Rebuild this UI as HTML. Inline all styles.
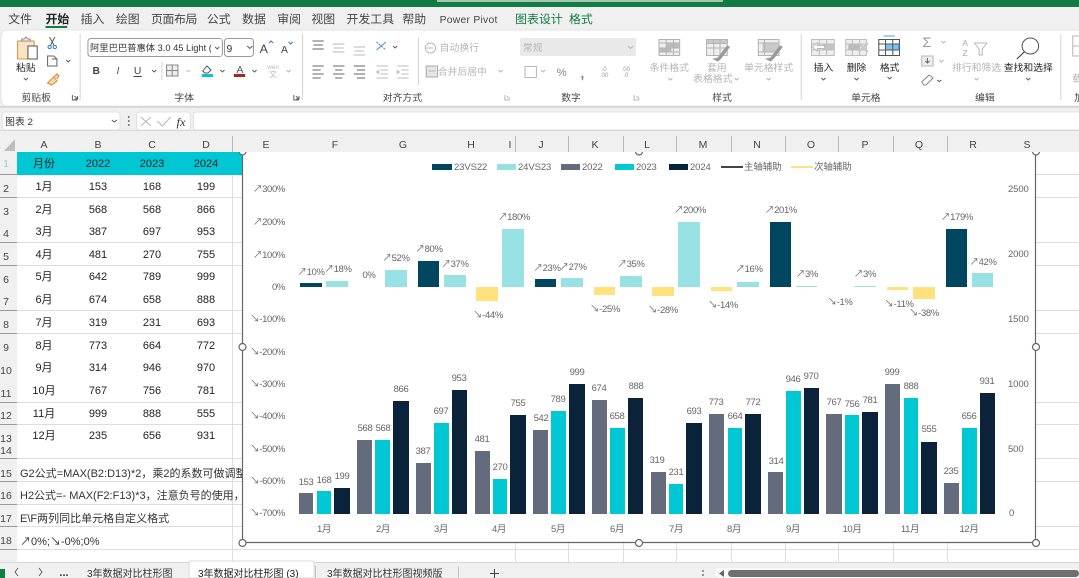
<!DOCTYPE html>
<html lang="zh"><head><meta charset="utf-8"><title>Excel</title>
<style>
html,body{margin:0;padding:0;background:#fff;overflow:hidden;width:1079px;height:578px}
svg{display:block;font-family:"Liberation Sans","Noto Sans CJK SC",sans-serif}
.t{font-size:11px;fill:#222;text-anchor:middle}
.rh{font-size:10.5px;fill:#444;text-anchor:middle}
.ch{font-size:10.5px;fill:#444;text-anchor:middle}
.c{font-size:9.5px;fill:#666;text-anchor:middle;letter-spacing:-.35px}
.r{font-size:9.5px;fill:#666;text-anchor:end;letter-spacing:-.35px}
.l{font-size:9.5px;fill:#666;letter-spacing:-.1px}
.g{font-size:9.5px;fill:#444;text-anchor:middle}
.gd{font-size:9.5px;fill:#b4b4b4;text-anchor:middle}
.b{font-size:9.5px;fill:#222;text-anchor:middle}
.ic{fill:none;stroke:#666;stroke-width:1}
.id{fill:none;stroke:#b8b8b8;stroke-width:1}
.v{fill:none;stroke:#555;stroke-width:.9}
</style></head><body>
<svg width="1079" height="578" viewBox="0 0 1079 578" xmlns="http://www.w3.org/2000/svg">
<rect width="1079" height="578" fill="#fff"/>
<!-- title + tabs -->
<rect width="1079" height="7" fill="#107c41"/>
<rect x="437" width="286" height="2" fill="#a9c4b3"/>
<rect y="7" width="1079" height="129" fill="#f0f0f0"/>
<rect x="1" y="30" width="1090" height="76" rx="6" fill="#fff" stroke="#e4e4e4"/>
<rect y="106" width="1079" height="2" fill="#d8d8d8"/>
<rect x="520" y="38" width="116" height="18" rx="2" fill="#e9e9e9"/>
<!-- left part of the ribbon -->
<g transform="scale(1.0345,1)">
<g font-size="11.5" fill="#444">
<text x="8" y="23">文件</text><text x="44" y="23" font-weight="bold" fill="#222">开始</text><text x="78" y="23">插入</text><text x="112" y="23">绘图</text><text x="146" y="23" letter-spacing="-.4">页面布局</text><text x="200" y="23">公式</text><text x="234" y="23">数据</text><text x="268" y="23">审阅</text><text x="301" y="23">视图</text><text x="335" y="23">开发工具</text><text x="389" y="23">帮助</text><text x="425" y="23" font-size="10" letter-spacing=".25">Power Pivot</text><text x="498" y="23" fill="#107c41">图表设计</text>
</g>
<rect x="44" y="26" width="21" height="2" fill="#107c41"/>
<g stroke="#d4d4d4"><path d="M77.500 34V100M292.500 34V100M404.500 38V85M156.500 62V80"/></g>
<rect x="17" y="41" width="16" height="18" fill="#fbe3c4" stroke="#e0933a"/>
<path d="M21 41v-2h2.500l1.500-2 1.500 2h2.500v2z" fill="#fff" stroke="#888"/>
<rect x="27" y="46" width="9" height="13" fill="#fff" stroke="#555"/>
<text class="b" x="25" y="71">粘贴</text>
<path class="v" d="M23 78l2 2 2-2"/>
<path d="M48 37l4 8M53 37l-4 8" class="v"/><circle cx="48" cy="47" r="1.600" fill="none" stroke="#2b7cd3"/><circle cx="53" cy="47" r="1.600" fill="none" stroke="#2b7cd3"/>
<path class="ic" d="M46 56h6l3 3v7h-9zM50 59h5v7"/><path class="v" d="M64 60l2 2 2-2"/>
<path d="M46 83l6-6 3 4-5 4zM52 77l3-3 2 2-2 3" fill="#fbd9a8" stroke="#d98a2e"/>
<text class="g" x="35" y="101">剪贴板</text>
<path class="ic" d="M70 95v5h5M72 96l3 3M75 96v3h-3"/>
<rect x="85" y="38.500" width="130" height="18" rx="3" fill="#fff" stroke="#9a9a9a"/>
<text x="87" y="51" font-size="9" fill="#333">阿里巴巴普惠体 3.0 45 Light (</text><rect x="204" y="39" width="10" height="17" fill="#fff"/><path class="v" d="M208 47l2 2 2-2"/>
<rect x="217" y="38.500" width="28" height="18" rx="3" fill="#fff" stroke="#9a9a9a"/><text x="219" y="52" font-size="10" fill="#333">9</text><path class="v" d="M239 46l2.500 2.500 2.500-2.500"/>
<text x="255" y="53" font-size="12" fill="#444" text-anchor="middle">A</text><path d="M260 43l2-2 2 2" fill="none" stroke="#2b7cd3"/>
<text x="275" y="53" font-size="10" fill="#444" text-anchor="middle">A</text><path d="M279 42l2 2 2-2" fill="none" stroke="#2b7cd3"/>
<text x="93" y="74" font-size="10" font-weight="bold" fill="#444" text-anchor="middle">B</text>
<text x="114" y="74" font-size="10" font-style="italic" fill="#555" text-anchor="middle">I</text>
<text x="133" y="74" font-size="10" fill="#444" text-anchor="middle">U</text><path d="M129 76.500h8" stroke="#444"/>
<path class="v" d="M147 70l2 2 2-2"/>
<path d="M161 65h11v11h-11zM161 70.500h11M166.500 65v11" fill="#eee" stroke="#888"/>
<path class="id" d="M180 71h4"/>
<path d="M196 71l4-5 4 4-3 3h-3z" fill="#fff" stroke="#555"/><rect x="195" y="74" width="11" height="3" fill="#00c7d4"/><path class="v" d="M213 70l2 2 2-2"/>
<text x="232" y="73" font-size="10" fill="#555" text-anchor="middle">A</text><rect x="226" y="74" width="11" height="3" fill="#b02020"/><path class="v" d="M244 70l2 2 2-2"/>
<text x="264" y="69" font-size="6" fill="#bbb" text-anchor="middle">wén</text><text x="264" y="77" font-size="8" fill="#bbb" text-anchor="middle">文</text><path class="id" d="M277 70l2 2 2-2"/>
<text class="g" x="178" y="101">字体</text>
<path class="ic" d="M284 95v5h5M286 96l3 3M289 96v3h-3"/>
<path class="ic" d="M302 41h11M303 45h9M302 49h11"/>
<path class="id" d="M322 44h11M323 48h9M322 52h11"/>
<path class="id" d="M342 47h11M343 51h9M342 55h11"/>
<path d="M364 50l9-8" stroke="#2b9fe0" fill="none"/><path d="M364 42l9 8" stroke="#777" stroke-dasharray="2 1" fill="none"/><path class="v" d="M380 46l2 2 2-2"/>
<path class="ic" d="M302 66h11M302 70h8M302 74h11M302 78h8"/>
<path class="ic" d="M322 66h11M324 70h7M322 74h11M324 78h7"/>
<path class="ic" d="M342 66h11M345 70h8M342 74h11M345 78h8"/>
<path class="id" d="M364 66h11M368 70h7M368 74h7M364 78h11M364 72l2-1.500v3z"/>
<path class="id" d="M384 66h11M388 70h7M388 74h7M384 78h11M386 72l-2-1.500v3z"/>
<text class="g" x="389" y="101">对齐方式</text>
<path class="id" d="M488 95v5h5M490 96l3 3"/>
<circle cx="416" cy="48" r="5" class="id"/><path class="id" d="M412 48h7"/>
<text class="gd" x="444" y="51" font-size="10">自动换行</text>
<rect x="412" y="66" width="11" height="11" fill="#e6e6e6" stroke="#aaa"/><path class="id" d="M414 71h7"/>
<text class="gd" x="447" y="75">合并后居中</text><path class="id" d="M482 70l2 2 2-2"/>
<text class="gd" x="515" y="51">常规</text>
<rect x="507.500" y="66.500" width="11" height="11" class="id"/>
<!-- formula bar -->
<rect x="2" y="112" width="114" height="18" rx="3" fill="#fff" stroke="#e0e0e0"/>
<text x="5" y="125" font-size="9.500" fill="#333">图表 2</text><path class="v" d="M108 120l2.500 2 2.500-2"/>
<circle cx="124.500" cy="117" r=".9" fill="#555"/><circle cx="124.500" cy="121" r=".9" fill="#555"/><circle cx="124.500" cy="125" r=".9" fill="#555"/>
<rect x="132" y="112" width="52" height="18" rx="3" fill="#fff" stroke="#e0e0e0"/>
<path class="id" d="M136 117l10 9M146 117l-10 9M152 121l5 5 8-9"/>
<text x="175" y="126" font-size="12" font-style="italic" font-family="Liberation Serif" fill="#333" text-anchor="middle">fx</text>
<rect x="187" y="112" width="900" height="18" rx="3" fill="#fff" stroke="#e0e0e0"/>
</g>
<!-- right part of the ribbon -->
<g transform="translate(540,0) scale(1.0345,1) translate(-540,0)">
<text x="568" y="23" font-size="11.5" fill="#107c41">格式</text>
<g stroke="#d4d4d4"><path d="M792.500 34V100M1043.500 34V100"/></g>
<path class="id" d="M541 70l2 2 2-2"/>
<path class="id" d="M625 46l2.500 2.500 2.500-2.500"/>
<text x="561" y="76" font-size="11" fill="#888" text-anchor="middle">%</text>
<text x="581" y="78" font-size="14" font-weight="bold" fill="#888" text-anchor="middle">,</text>
<text x="602" y="71" font-size="6" fill="#999" text-anchor="middle">.0</text><text x="602" y="77" font-size="6" fill="#999" text-anchor="middle">.00</text>
<text x="623" y="71" font-size="6" fill="#999" text-anchor="middle">.00</text><text x="623" y="77" font-size="6" fill="#999" text-anchor="middle">.0</text>
<text class="g" x="570" y="101">数字</text>
<path class="id" d="M631 95v5h5M633 96l3 3"/>
<g stroke="#b4b4b4" fill="#eee"><rect x="655" y="39.500" width="20" height="16"/><rect x="662" y="43" width="13" height="5" fill="#bbb" stroke="none"/><rect x="655" y="48" width="12" height="4" fill="#bbb" stroke="none"/><path d="M655 43h20M655 48h20M655 52h20M662 39v16M669 39v16" fill="none"/></g>
<g stroke="#b4b4b4" fill="#eee"><rect x="701" y="39.500" width="20" height="16"/><rect x="701" y="39.500" width="20" height="4" fill="#c8c8c8"/><path d="M701 48h20M708 39v16M714 39v16" fill="none"/><path d="M708 59l4-1 9-12 2 1-8 11-3 3z" fill="#999" stroke="#999"/></g>
<g stroke="#b4b4b4" fill="#eee"><rect x="751" y="39.500" width="20" height="16"/><rect x="755" y="43" width="16" height="9" fill="#c8c8c8" stroke="none"/><path d="M751 43h20M751 52h20M757 39v16" fill="none"/><path d="M759 59l4-1 9-12 2 1-8 11-3 3z" fill="#999" stroke="#999"/></g>
<text class="gd" x="665" y="71">条件格式</text><text class="gd" x="711" y="71">套用</text><text class="gd" x="707" y="82">表格格式</text><text class="gd" x="761" y="71">单元格样式</text>
<path class="id" d="M664 78l2 2 2-2M728 78l2 2 2-2M759 78l2 2 2-2"/>
<text class="g" x="716" y="101">样式</text>
<g stroke="#bdbdbd" fill="#eee"><rect x="802.500" y="39.500" width="22" height="16"/><rect x="813" y="44" width="11" height="6" fill="#c4c4c4" stroke="none"/><path d="M802 44h22M802 50h22M810 39v16M817 39v16" fill="none"/><path d="M803 47l5-4v2.500h7v3h-7V51z" fill="#fff" stroke="#bbb"/></g>
<g stroke="#bdbdbd" fill="#eee"><rect x="835.500" y="39.500" width="20" height="16"/><rect x="838" y="44" width="11" height="6" fill="#bbb" stroke="none"/><path d="M835 44h20M835 50h20M842 39v16M849 39v16" fill="none"/><path d="M848 43l9 9M857 43l-9 9" stroke="#c8c8c8" stroke-width="2"/></g>
<g fill="#fff" stroke="#555"><rect x="867.500" y="39.500" width="20" height="16"/><rect x="874" y="44" width="13" height="6" fill="#7fc2ee" stroke="#2b7cd3"/><path d="M867 44h20M867 50h20M874 39v16M881 39v16" fill="none"/></g>
<path d="M872 36h11" stroke="#4aa3e0"/>
<text class="b" x="814" y="71">插入</text><text class="b" x="846" y="71">删除</text><text class="b" x="878" y="71">格式</text>
<path class="v" d="M812 78l2 2 2-2M844 78l2 2 2-2M876 77l2 2 2-2"/>
<text class="g" x="855" y="101">单元格</text>
<text x="914" y="47" font-size="14" fill="#999" text-anchor="middle">Σ</text><path class="id" d="M928 41l2 2 2-2"/>
<rect x="909" y="56" width="11" height="10" fill="#eee" stroke="#b8b8b8"/><path class="ic" d="M914.500 58v5M912.500 61l2 2 2-2" stroke="#999"/><path class="id" d="M926 60l2 2 2-2"/>
<path d="M909 82l7-7 4 3-7 7h-2z" fill="#fff" stroke="#888"/><path class="v" d="M924 80l2 1.500 2-1.500"/>
<text x="951" y="46" font-size="8" fill="#aaa" text-anchor="middle">A</text><text x="951" y="56" font-size="8" fill="#aaa" text-anchor="middle">Z</text>
<path class="id" d="M960 43h12l-4.500 6v6h-3v-6z" stroke="#aaa"/>
<circle cx="1014" cy="46" r="8" fill="none" stroke="#555"/><path d="M1008 52l-7 7" stroke="#333"/>
<text class="gd" x="962" y="71">排行和筛选</text><text class="b" x="1012" y="71">查找和选择</text>
<path class="id" d="M960 78l2 2 2-2"/><path class="v" d="M1010 78l2 2 2-2"/>
<text class="g" x="970" y="101">编辑</text>
<rect x="1055" y="36" width="18" height="20" class="id"/><path class="id" d="M1055 46h18M1064 36v20"/>
<text class="gd" x="1066" y="71">加</text><text class="gd" x="1064" y="82">载项</text>
<text class="g" x="1066" y="101">加载</text>
</g>
<rect y="130" width="1079" height="6" fill="#f0f0f0"/><path d="M0 130.500H1079" stroke="#d8d8d8"/>
<!-- grid -->
<rect y="152" width="17" height="410" fill="#f0f0f0"/>
<g stroke="#dedede"><path d="M17 197.500H1079M17 242.500H1079M17 265.500H1079M17 310.500H1079M17 333.500H1079M17 402.500H1079M17 424.500H1079M17 458.500H1079M17 481.500H1079M17 504.500H242M17 526.500H1079M17 549.500H1079M1036 174.500H1079M232.500 175V562M515.500 543V562M568.500 543V562M623.500 543V562M676.500 543V562M731.500 543V562M785.500 543V562M838.500 543V562M893.500 543V562M947.500 543V562"/></g>
<g stroke="#999"><path d="M0 174.500h17M0 197.500h17M0 242.500h17M0 265.500h17M0 310.500h17M0 333.500h17M0 402.500h17M0 424.500h17M0 458.500h17M0 481.500h17M0 504.500h17M0 526.500h17M0 549.500h17"/></g>
<rect x="17" y="152" width="225" height="23" fill="#00c7d4"/>
<text class="rh" x="6" y="167" style="fill:#9cc">1</text><text class="rh" x="6" y="192">2</text><text class="rh" x="6" y="215">3</text><text class="rh" x="6" y="237">4</text><text class="rh" x="6" y="260">5</text><text class="rh" x="6" y="283">6</text><text class="rh" x="6" y="305">7</text><text class="rh" x="6" y="328">8</text><text class="rh" x="6" y="351">9</text><text class="rh" x="6" y="374">10</text><text class="rh" x="6" y="397">11</text><text class="rh" x="6" y="419">12</text><text class="rh" x="6" y="442">13</text><text class="rh" x="6" y="454">14</text><text class="rh" x="6" y="477">15</text><text class="rh" x="6" y="499">16</text><text class="rh" x="6" y="522">17</text><text class="rh" x="6" y="544">18</text>
<!-- table -->
<text class="t" x="44" y="167">月份</text><text class="t" x="98" y="167">2022</text><text class="t" x="152" y="167">2023</text><text class="t" x="206" y="167">2024</text>
<text class="t" x="44" y="190">1月</text><text class="t" x="98" y="190">153</text><text class="t" x="152" y="190">168</text><text class="t" x="206" y="190">199</text>
<text class="t" x="44" y="213">2月</text><text class="t" x="98" y="213">568</text><text class="t" x="152" y="213">568</text><text class="t" x="206" y="213">866</text>
<text class="t" x="44" y="235">3月</text><text class="t" x="98" y="235">387</text><text class="t" x="152" y="235">697</text><text class="t" x="206" y="235">953</text>
<text class="t" x="44" y="258">4月</text><text class="t" x="98" y="258">481</text><text class="t" x="152" y="258">270</text><text class="t" x="206" y="258">755</text>
<text class="t" x="44" y="280">5月</text><text class="t" x="98" y="280">642</text><text class="t" x="152" y="280">789</text><text class="t" x="206" y="280">999</text>
<text class="t" x="44" y="303">6月</text><text class="t" x="98" y="303">674</text><text class="t" x="152" y="303">658</text><text class="t" x="206" y="303">888</text>
<text class="t" x="44" y="326">7月</text><text class="t" x="98" y="326">319</text><text class="t" x="152" y="326">231</text><text class="t" x="206" y="326">693</text>
<text class="t" x="44" y="349">8月</text><text class="t" x="98" y="349">773</text><text class="t" x="152" y="349">664</text><text class="t" x="206" y="349">772</text>
<text class="t" x="44" y="371">9月</text><text class="t" x="98" y="371">314</text><text class="t" x="152" y="371">946</text><text class="t" x="206" y="371">970</text>
<text class="t" x="44" y="394">10月</text><text class="t" x="98" y="394">767</text><text class="t" x="152" y="394">756</text><text class="t" x="206" y="394">781</text>
<text class="t" x="44" y="417">11月</text><text class="t" x="98" y="417">999</text><text class="t" x="152" y="417">888</text><text class="t" x="206" y="417">555</text>
<text class="t" x="44" y="439">12月</text><text class="t" x="98" y="439">235</text><text class="t" x="152" y="439">656</text><text class="t" x="206" y="439">931</text>
<g font-size="11" fill="#333">
<text x="20" y="477">G2公式=MAX(B2:D13)*2，乘2的系数可做调整，</text>
<text x="20" y="499">H2公式=- MAX(F2:F13)*3，注意负号的使用，通过</text>
<text x="20" y="522">E\F两列同比单元格自定义格式</text>
<text x="20" y="545">↗0%;↘-0%;0%</text>
</g>
<!-- chart -->
<rect x="242.500" y="152" width="793" height="390.500" fill="#fff"/>
<g fill="#00465f"><rect x="300" y="283" width="22" height="4"/><rect x="418" y="261" width="21" height="26"/><rect x="535" y="279" width="21" height="8"/><rect x="770" y="222" width="21" height="65"/><rect x="946" y="229" width="21" height="58"/></g>
<g fill="#98e2e6"><rect x="326" y="281" width="22" height="6"/><rect x="385" y="270" width="22" height="17"/><rect x="444" y="275" width="22" height="12"/><rect x="502" y="229" width="22" height="58"/><rect x="561" y="278" width="22" height="9"/><rect x="620" y="276" width="22" height="11"/><rect x="678" y="222" width="22" height="65"/><rect x="737" y="282" width="22" height="5"/><rect x="796" y="286" width="21" height="1"/><rect x="854" y="286" width="22" height="1"/><rect x="972" y="273" width="21" height="14"/></g>
<g fill="#ffe27c"><rect x="476" y="287" width="22" height="14"/><rect x="594" y="287" width="21" height="8"/><rect x="652" y="287" width="22" height="9"/><rect x="711" y="287" width="21" height="4"/><rect x="887" y="287" width="21" height="3"/><rect x="913" y="287" width="22" height="12"/></g>
<text class="c" x="311" y="275">↗10%</text><text class="c" x="338" y="272">↗18%</text><text class="c" x="369" y="278">0%</text><text class="c" x="396" y="261">↗52%</text><text class="c" x="429" y="252">↗80%</text><text class="c" x="455" y="267">↗37%</text><text class="c" x="488" y="318">↘-44%</text><text class="c" x="514" y="220">↗180%</text><text class="c" x="547" y="271">↗23%</text><text class="c" x="573" y="270">↗27%</text><text class="c" x="605" y="312">↘-25%</text><text class="c" x="631" y="267">↗35%</text><text class="c" x="663" y="313">↘-28%</text><text class="c" x="690" y="213">↗200%</text><text class="c" x="723" y="308">↘-14%</text><text class="c" x="749" y="272">↗16%</text><text class="c" x="781" y="213">↗201%</text><text class="c" x="807" y="277">↗3%</text><text class="c" x="840" y="305">↘-1%</text><text class="c" x="865" y="277">↗3%</text><text class="c" x="899" y="307">↘-11%</text><text class="c" x="924" y="316">↘-38%</text><text class="c" x="957" y="220">↗179%</text><text class="c" x="983" y="265">↗42%</text>
<text class="r" x="285" y="192">↗300%</text><text class="r" x="285" y="225">↗200%</text><text class="r" x="285" y="258">↗100%</text><text class="r" x="285" y="290">0%</text><text class="r" x="285" y="322">↘-100%</text><text class="r" x="285" y="355">↘-200%</text><text class="r" x="285" y="387">↘-300%</text><text class="r" x="285" y="419">↘-400%</text><text class="r" x="285" y="452">↘-500%</text><text class="r" x="285" y="484">↘-600%</text><text class="r" x="285" y="516">↘-700%</text>
<text class="l" x="1008" y="192">2500</text><text class="l" x="1008" y="257">2000</text><text class="l" x="1008" y="322">1500</text><text class="l" x="1008" y="387">1000</text><text class="l" x="1008" y="452">500</text><text class="l" x="1009" y="516">0</text>
<!-- lower bars -->
<g fill="#636b7c"><rect x="299" y="493" width="14" height="21"/><rect x="357" y="440" width="15" height="74"/><rect x="416" y="463" width="15" height="51"/><rect x="475" y="451" width="15" height="63"/><rect x="533" y="430" width="15" height="84"/><rect x="592" y="400" width="15" height="114"/><rect x="651" y="472" width="15" height="42"/><rect x="709" y="414" width="15" height="100"/><rect x="768" y="472" width="15" height="42"/><rect x="826" y="414" width="16" height="100"/><rect x="885" y="384" width="15" height="130"/><rect x="944" y="483" width="15" height="31"/></g>
<g fill="#00c7d4"><rect x="317" y="491" width="14" height="23"/><rect x="375" y="440" width="15" height="74"/><rect x="434" y="423" width="15" height="91"/><rect x="493" y="479" width="14" height="35"/><rect x="551" y="411" width="15" height="103"/><rect x="610" y="428" width="15" height="86"/><rect x="669" y="484" width="14" height="30"/><rect x="728" y="428" width="14" height="86"/><rect x="786" y="391" width="15" height="123"/><rect x="845" y="415" width="14" height="99"/><rect x="904" y="398" width="14" height="116"/><rect x="962" y="428" width="15" height="86"/></g>
<g fill="#0a233b"><rect x="334" y="488" width="16" height="26"/><rect x="393" y="401" width="16" height="113"/><rect x="452" y="390" width="15" height="124"/><rect x="510" y="415" width="16" height="99"/><rect x="569" y="384" width="16" height="130"/><rect x="628" y="398" width="15" height="116"/><rect x="686" y="423" width="16" height="91"/><rect x="745" y="414" width="16" height="100"/><rect x="804" y="388" width="15" height="126"/><rect x="862" y="412" width="16" height="102"/><rect x="921" y="442" width="16" height="72"/><rect x="980" y="393" width="15" height="121"/></g>
<text class="c" x="306" y="485">153</text><text class="c" x="324" y="483">168</text><text class="c" x="342" y="479">199</text>
<text class="c" x="365" y="431">568</text><text class="c" x="383" y="431">568</text><text class="c" x="401" y="392">866</text>
<text class="c" x="423" y="454">387</text><text class="c" x="441" y="414">697</text><text class="c" x="459" y="381">953</text>
<text class="c" x="482" y="442">481</text><text class="c" x="500" y="470">270</text><text class="c" x="518" y="406">755</text>
<text class="c" x="541" y="421">542</text><text class="c" x="558" y="402">789</text><text class="c" x="577" y="375">999</text>
<text class="c" x="599" y="391">674</text><text class="c" x="617" y="419">658</text><text class="c" x="636" y="389">888</text>
<text class="c" x="657" y="463">319</text><text class="c" x="676" y="475">231</text><text class="c" x="694" y="414">693</text>
<text class="c" x="716" y="405">773</text><text class="c" x="735" y="419">664</text><text class="c" x="753" y="405">772</text>
<text class="c" x="776" y="464">314</text><text class="c" x="793" y="382">946</text><text class="c" x="811" y="379">970</text>
<text class="c" x="834" y="405">767</text><text class="c" x="852" y="407">756</text><text class="c" x="870" y="403">781</text>
<text class="c" x="892" y="375">999</text><text class="c" x="911" y="389">888</text><text class="c" x="929" y="432">555</text>
<text class="c" x="951" y="474">235</text><text class="c" x="969" y="419">656</text><text class="c" x="987" y="384">931</text>
<text class="c" x="324" y="532">1月</text><text class="c" x="383" y="532">2月</text><text class="c" x="441" y="532">3月</text><text class="c" x="499" y="532">4月</text><text class="c" x="558" y="532">5月</text><text class="c" x="617" y="532">6月</text><text class="c" x="676" y="532">7月</text><text class="c" x="734" y="532">8月</text><text class="c" x="793" y="532">9月</text><text class="c" x="852" y="532">10月</text><text class="c" x="910" y="532">11月</text><text class="c" x="969" y="532">12月</text>
<!-- legend -->
<rect x="432" y="164" width="20" height="6" fill="#00465f"/><text class="l" x="454" y="170">23VS22</text>
<rect x="497" y="164" width="19" height="6" fill="#98e2e6"/><text class="l" x="518" y="170">24VS23</text>
<rect x="561" y="164" width="19" height="6" fill="#636b7c"/><text class="l" x="582" y="170">2022</text>
<rect x="615" y="164" width="19" height="6" fill="#00c7d4"/><text class="l" x="636" y="170">2023</text>
<rect x="669" y="164" width="19" height="6" fill="#0a233b"/><text class="l" x="690" y="170">2024</text>
<rect x="721" y="166" width="22" height="2" fill="#444"/><text class="l" x="744" y="170">主轴辅助</text>
<rect x="791" y="166" width="22" height="2" fill="#ffe27c"/><text class="l" x="814" y="170">次轴辅助</text>
<!-- chart frame: the top edge sits under the column header -->
<path d="M242.500 150V542.500H1035.500V150" fill="none" stroke="#666" stroke-width="1.200"/>
<g fill="#fff" stroke="#666" stroke-width="1.200"><circle cx="242.500" cy="347" r="3.500"/><circle cx="1036" cy="347" r="3.500"/><circle cx="242.500" cy="543" r="3.500"/><circle cx="639" cy="543" r="3.500"/><circle cx="1036" cy="543" r="3.500"/><circle cx="242.500" cy="151.500" r="3.500"/><circle cx="639" cy="151.500" r="3.500"/><circle cx="1036" cy="151.500" r="3.500"/></g>
<!-- column header on top of the chart -->
<rect y="136" width="1079" height="16" fill="#f0f0f0"/>
<path d="M15 139v12H4z" fill="#bdbdbd"/>
<text class="ch" x="44" y="148">A</text><text class="ch" x="98" y="148">B</text><text class="ch" x="152" y="148">C</text><text class="ch" x="206" y="148">D</text><text class="ch" x="266" y="148">E</text><text class="ch" x="335" y="148">F</text><text class="ch" x="403" y="148">G</text><text class="ch" x="471" y="148">H</text><text class="ch" x="510" y="148">I</text><text class="ch" x="541" y="148">J</text><text class="ch" x="595" y="148">K</text><text class="ch" x="647" y="148">L</text><text class="ch" x="703" y="148">M</text><text class="ch" x="757" y="148">N</text><text class="ch" x="811" y="148">O</text><text class="ch" x="865" y="148">P</text><text class="ch" x="919" y="148">Q</text><text class="ch" x="973" y="148">R</text><text class="ch" x="1027" y="148">S</text>
<path d="M232.500 136v16M515.500 136v16M568.500 136v16M623.500 136v16M676.500 136v16M731.500 136v16M785.500 136v16M838.500 136v16M893.500 136v16M947.500 136v16" stroke="#b8b8b8"/>
<!-- sheet tabs -->
<rect y="562" width="1079" height="16" fill="#f0f0f0"/><path d="M0 562.500H189M314 562.500H1079" stroke="#d8d8d8"/>
<rect y="569" width="5" height="9" fill="#107c41"/>
<path class="v" d="M18 568l-3 4 3 4M39 568l3 4-3 4"/>
<text x="64" y="576" font-size="11" font-weight="bold" fill="#333" text-anchor="middle">...</text>
<text x="87" y="577" font-size="10" fill="#333">3年数据对比柱形图</text>
<path d="M189 578v-15q0-2 2-2h121q2 0 2 2v15z" fill="#fff" stroke="#d8d8d8"/>
<text x="198" y="577" font-size="10" fill="#222">3年数据对比柱形图 (3)</text>
<path d="M315.500 566v12M458.500 566v12" stroke="#c4c4c4"/>
<text x="327" y="577" font-size="10" fill="#333">3年数据对比柱形图视频版</text>
<path d="M490 573.500h9M494.500 569v9" stroke="#444"/>
<circle cx="703" cy="571" r=".9" fill="#555"/><circle cx="703" cy="575" r=".9" fill="#555"/>
<rect x="715" y="568" width="364" height="10" rx="4" fill="#f8f8f8"/>
<path d="M724 570l-5 3.500 5 3.500z" fill="#666"/>
<rect x="728" y="570" width="351" height="7" rx="3.500" fill="#6f6f6f"/>
</svg>
</body></html>
